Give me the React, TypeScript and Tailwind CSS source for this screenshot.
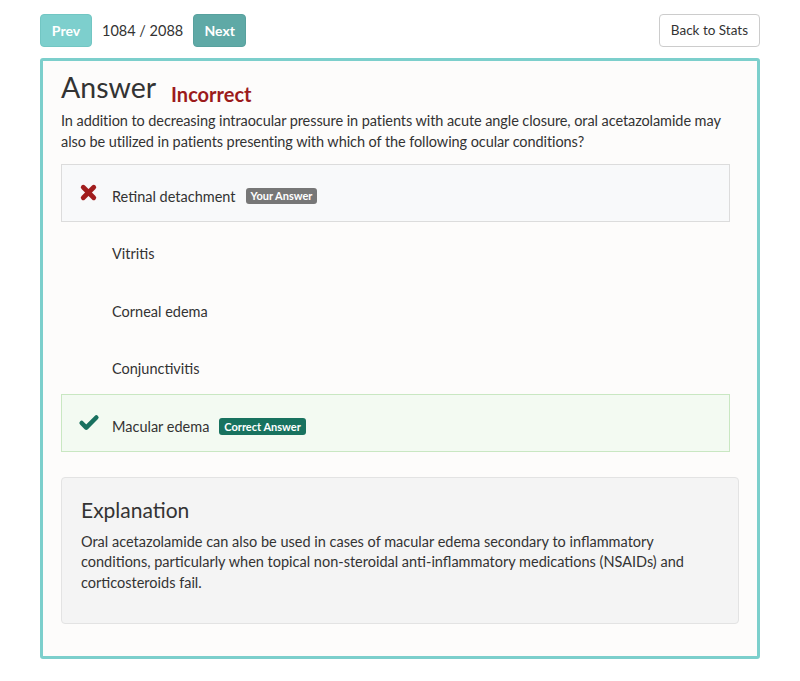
import { Check, X } from 'lucide-react';

const options = [
  { text: 'Retinal detachment', state: 'wrong' },
  { text: 'Vitritis', state: 'none' },
  { text: 'Corneal edema', state: 'none' },
  { text: 'Conjunctivitis', state: 'none' },
  { text: 'Macular edema', state: 'correct' },
];

function OptionRow({ text, state }: { text: string; state: string }) {
  const box =
    state === 'wrong'
      ? 'bg-[#f8f9fa] border border-[#dcdcdc]'
      : state === 'correct'
        ? 'bg-[#f3faf2] border border-[#c9e7c2]'
        : 'border border-transparent';
  return (
    <div className={`flex items-center h-[57.5px] pl-[16px] pt-[4px] ${box}`}>
      <div className="w-[34px] flex items-center -mt-[4px]">
        {state === 'wrong' && <X size={21} strokeWidth={5.5} className="text-[#a11d1d]" />}
        {state === 'correct' && <Check size={22} strokeWidth={5} className="text-[#18705f]" />}
      </div>
      <span className="text-[14.5px] text-[#333] pt-[4px]">{text}</span>
      {state === 'wrong' && (
        <span className="ml-[10px] mt-[3px] bg-[#777] text-white text-[11px] font-bold rounded-[3px] px-[5px] leading-[16px]">
          Your Answer
        </span>
      )}
      {state === 'correct' && (
        <span className="ml-[10px] mt-[3px] bg-[#18725f] text-white text-[11px] font-bold rounded-[3px] px-[5px] leading-[17px]">
          Correct Answer
        </span>
      )}
    </div>
  );
}

export default function App() {
  return (
    <div className="min-h-[681px] bg-white font-['Lato',sans-serif] text-[#333]">
      <div className="px-[40px] pt-[14px]">
        <div className="flex items-center justify-between h-[33px]">
          <div className="flex items-center">
            <button className="h-[33px] w-[52px] rounded-[4px] bg-[#7dcfcd] border border-[#72c6c3] text-white text-[14px] font-bold">
              Prev
            </button>
            <span className="mx-[10px] text-[14.5px] text-[#333]">1084 / 2088</span>
            <button className="h-[33px] w-[53px] rounded-[4px] bg-[#5fa9a6] border border-[#58a19e] text-white text-[14px] font-bold">
              Next
            </button>
          </div>
          <button className="h-[33px] px-[11px] rounded-[4px] bg-white border border-[#cccccc] text-[13.5px] text-[#333]">
            Back to Stats
          </button>
        </div>

        <div className="mt-[11px] border-[3px] border-[#7ccfcc] rounded-[3px] bg-[#fdfcfb] pl-[18px] pr-[18px] pt-[7px] pb-[32px]">
          <div className="flex items-end">
            <h2 className="text-[28.5px] leading-[38px] text-[#333]">Answer</h2>
            <span className="ml-[15px] text-[20px] font-bold text-[#9c1b1b] leading-[28px] -mb-[2px]">Incorrect</span>
          </div>
          <p className="mt-[4px] text-[14.5px] leading-[21px] tracking-[-0.08px] text-[#333] pr-[8px]">
            In addition to decreasing intraocular pressure in patients with acute angle closure, oral acetazolamide may
            also be utilized in patients presenting with which of the following ocular conditions?
          </p>

          <div className="mt-[12px] mr-[9px] flex flex-col">
            {options.map((o) => (
              <OptionRow key={o.text} text={o.text} state={o.state} />
            ))}
          </div>

          <div className="mt-[25px] bg-[#f4f4f4] border border-[#e3e3e3] rounded-[4px] px-[19px] pt-[19px] pb-[30px]">
            <h3 className="text-[21px] leading-[26px] text-[#333]">Explanation</h3>
            <p className="mt-[9px] text-[14.5px] leading-[20.5px] text-[#333]">
              Oral acetazolamide can also be used in cases of macular edema secondary to inflammatory conditions,
              particularly when topical non-steroidal anti-inflammatory medications (NSAIDs) and corticosteroids fail.
            </p>
          </div>
        </div>
      </div>
    </div>
  );
}
